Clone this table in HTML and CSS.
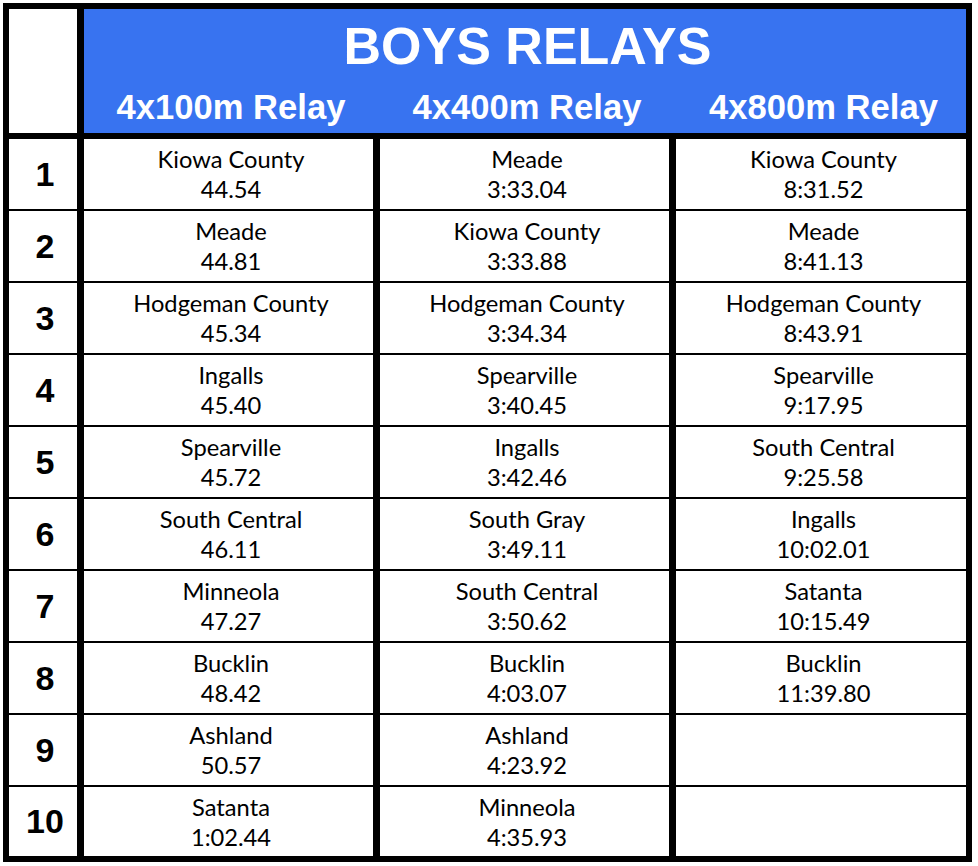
FILE: index.html
```html
<!DOCTYPE html>
<html lang="en">
<head>
<meta charset="utf-8">
<title>Boys Relays</title>
<link rel="stylesheet" href="styles.css">
</head>
<body>
<div class="board">
  <div class="corner"></div>
  <div class="head">
    <div class="title">BOYS RELAYS</div>
    <div class="event">4x100m Relay</div>
    <div class="event">4x400m Relay</div>
    <div class="event">4x800m Relay</div>
  </div>

  <div class="rank">1</div>
  <div class="cell"><span>Kiowa County</span><span>44.54</span></div>
  <div class="cell"><span>Meade</span><span>3:33.04</span></div>
  <div class="cell"><span>Kiowa County</span><span>8:31.52</span></div>

  <div class="rank">2</div>
  <div class="cell"><span>Meade</span><span>44.81</span></div>
  <div class="cell"><span>Kiowa County</span><span>3:33.88</span></div>
  <div class="cell"><span>Meade</span><span>8:41.13</span></div>

  <div class="rank">3</div>
  <div class="cell"><span>Hodgeman County</span><span>45.34</span></div>
  <div class="cell"><span>Hodgeman County</span><span>3:34.34</span></div>
  <div class="cell"><span>Hodgeman County</span><span>8:43.91</span></div>

  <div class="rank">4</div>
  <div class="cell"><span>Ingalls</span><span>45.40</span></div>
  <div class="cell"><span>Spearville</span><span>3:40.45</span></div>
  <div class="cell"><span>Spearville</span><span>9:17.95</span></div>

  <div class="rank">5</div>
  <div class="cell"><span>Spearville</span><span>45.72</span></div>
  <div class="cell"><span>Ingalls</span><span>3:42.46</span></div>
  <div class="cell"><span>South Central</span><span>9:25.58</span></div>

  <div class="rank">6</div>
  <div class="cell"><span>South Central</span><span>46.11</span></div>
  <div class="cell"><span>South Gray</span><span>3:49.11</span></div>
  <div class="cell"><span>Ingalls</span><span>10:02.01</span></div>

  <div class="rank">7</div>
  <div class="cell"><span>Minneola</span><span>47.27</span></div>
  <div class="cell"><span>South Central</span><span>3:50.62</span></div>
  <div class="cell"><span>Satanta</span><span>10:15.49</span></div>

  <div class="rank">8</div>
  <div class="cell"><span>Bucklin</span><span>48.42</span></div>
  <div class="cell"><span>Bucklin</span><span>4:03.07</span></div>
  <div class="cell"><span>Bucklin</span><span>11:39.80</span></div>

  <div class="rank">9</div>
  <div class="cell"><span>Ashland</span><span>50.57</span></div>
  <div class="cell"><span>Ashland</span><span>4:23.92</span></div>
  <div class="cell"></div>

  <div class="rank last">10</div>
  <div class="cell last"><span>Satanta</span><span>1:02.44</span></div>
  <div class="cell last"><span>Minneola</span><span>4:35.93</span></div>
  <div class="cell last"></div>
</div>
</body>
</html>
```

FILE: styles.css
```css
html, body {
  margin: 0;
  background: #ffffff;
}

body {
  padding: 3px;
}

.board {
  display: grid;
  grid-template-columns: 68px 289px 289px 290px;
  column-gap: 7px;
  row-gap: 2px;
  width: max-content;
  padding: 6px;
  background: #000000;
}

.corner {
  height: 124px;
  margin-bottom: 4px;
  background: #ffffff;
}

.head {
  grid-column: 2 / 5;
  height: 124px;
  margin-bottom: 4px;
  box-sizing: border-box;
  padding-top: 7px;
  background: #3873f0;
  color: #ffffff;
  display: grid;
  grid-template-columns: 289px 289px 290px;
  column-gap: 7px;
  grid-template-rows: 60px 40px;
  row-gap: 11px;
  font-family: "Liberation Sans", Arial, sans-serif;
  font-weight: bold;
  text-align: center;
}

.title {
  grid-column: 1 / -1;
  padding-left: 5px;
  font-size: 52px;
  line-height: 60px;
}

.event {
  padding-left: 5px;
  font-size: 34.6px;
  line-height: 40px;
}

.rank {
  height: 70px;
  box-sizing: border-box;
  padding-left: 4px;
  background: #ffffff;
  display: flex;
  align-items: center;
  justify-content: center;
  font-family: "Liberation Sans", Arial, sans-serif;
  font-weight: bold;
  font-size: 34px;
  color: #000000;
}

.cell {
  height: 70px;
  box-sizing: border-box;
  padding-left: 5px;
  background: #ffffff;
  display: flex;
  flex-direction: column;
  align-items: center;
  justify-content: center;
  font-family: Lato, "Open Sans", sans-serif;
  font-size: 23.7px;
  line-height: 30px;
  color: #000000;
}

.last {
  height: 69px;
}
```
